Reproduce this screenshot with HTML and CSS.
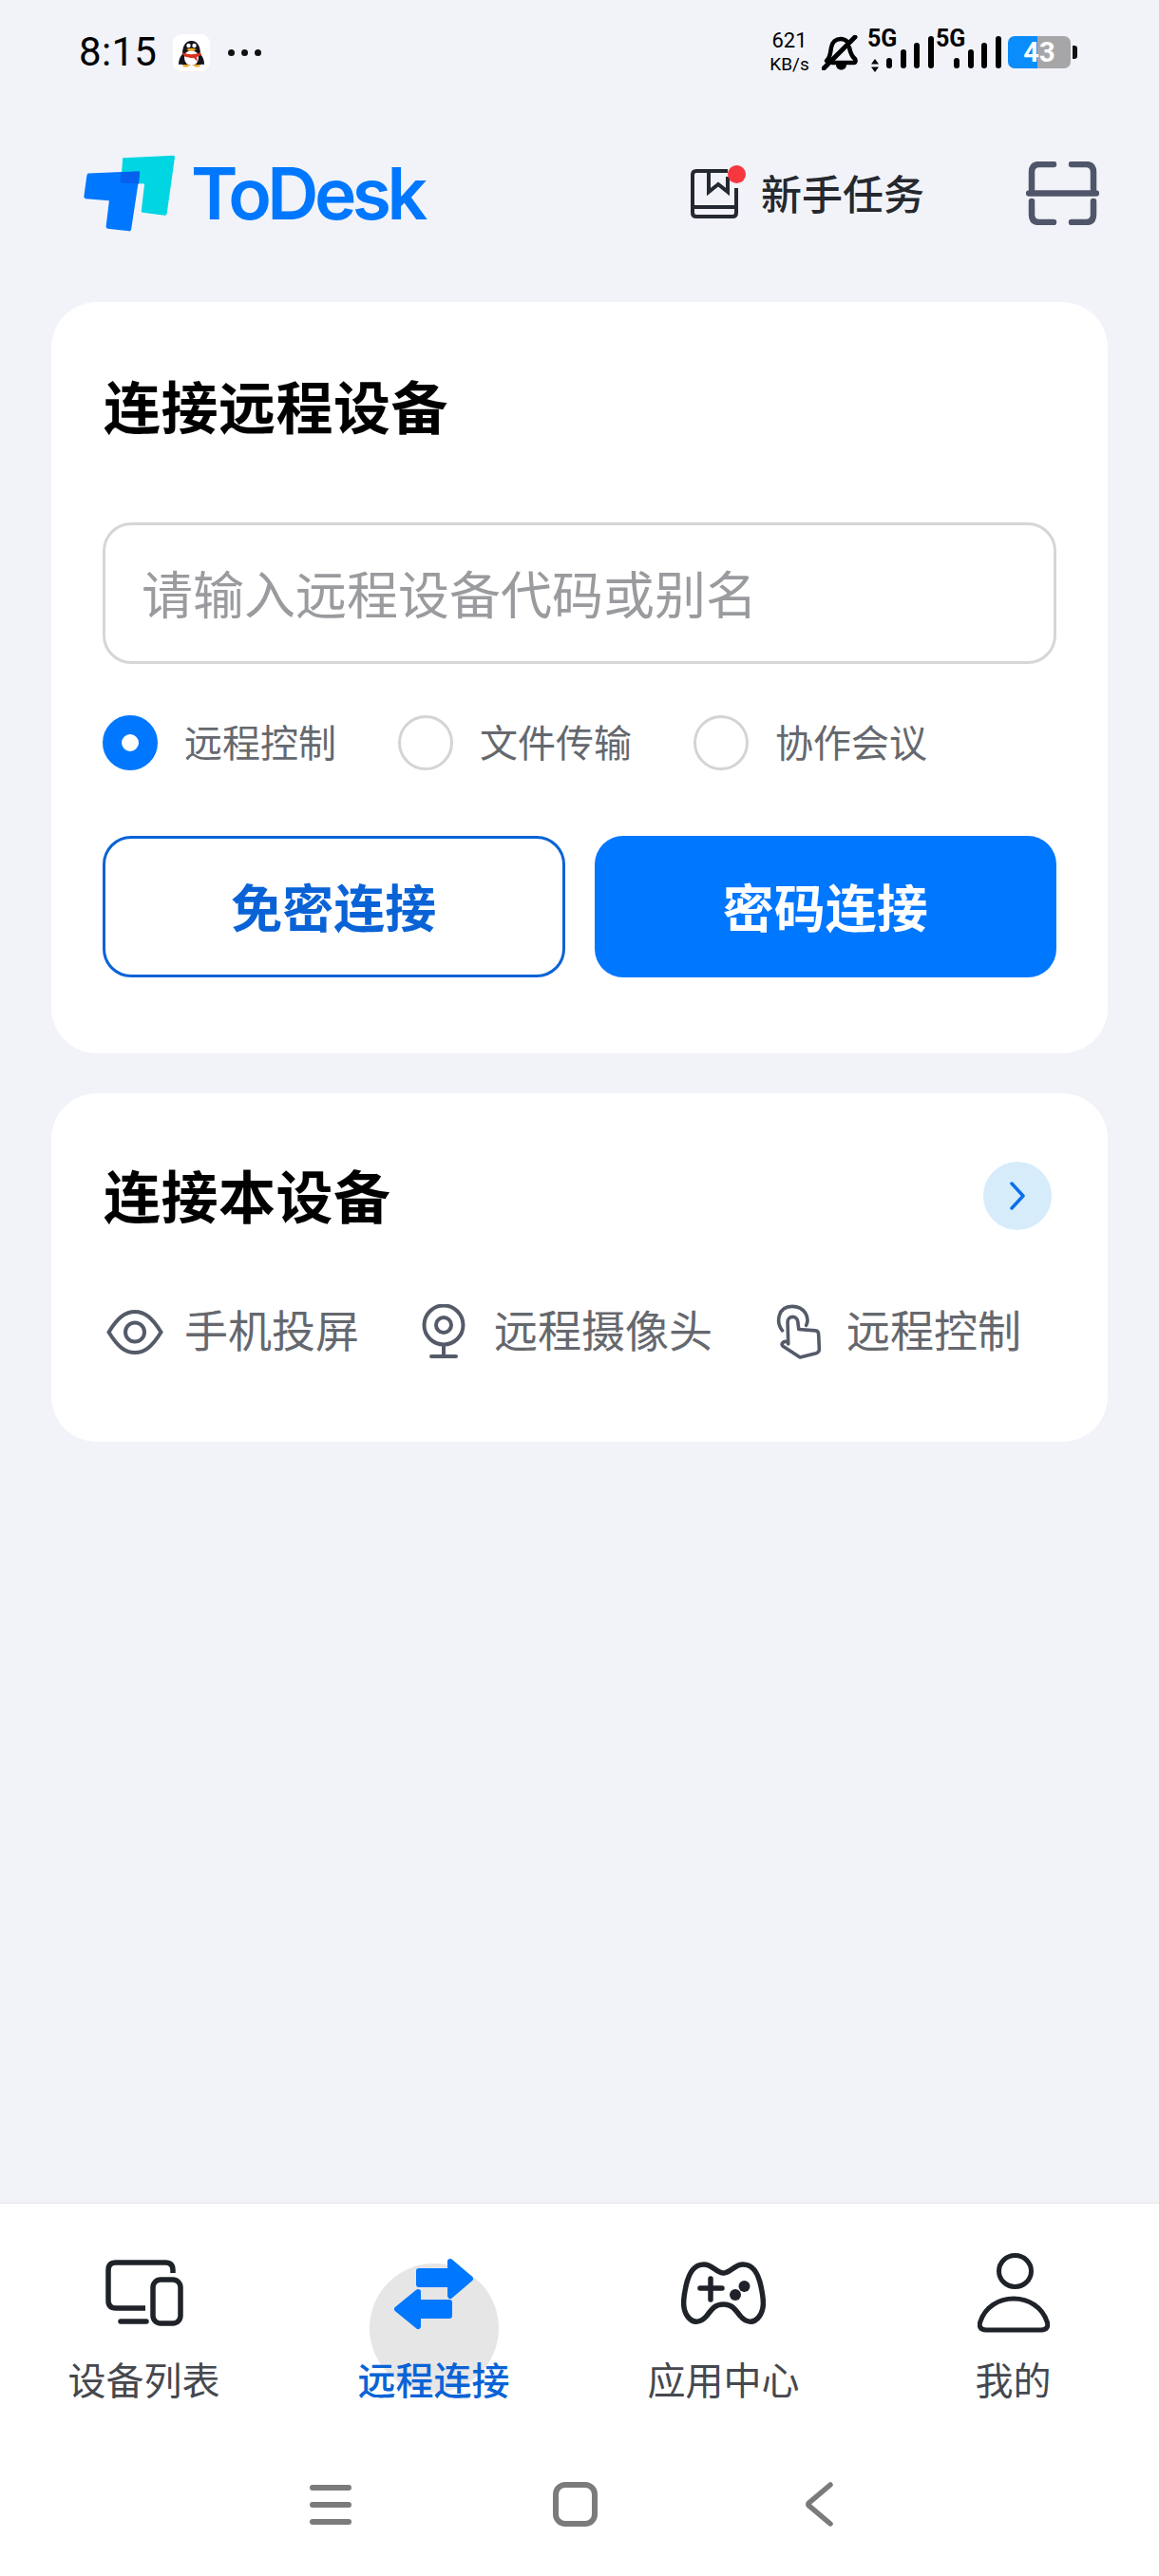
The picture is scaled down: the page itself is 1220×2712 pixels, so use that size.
FILE: index.html
```html
<!DOCTYPE html>
<html lang="zh-CN">
<head>
<meta charset="utf-8">
<title>ToDesk</title>
<link rel="stylesheet" href="styles.css">
</head>
<body>
<div class="page">
  <div class="status">
    <span class="time">8:15</span>
    <span class="qq">
      <svg class="qq-svg" viewBox="0 0 39 39">
        <path d="M12 33c-3-2-6-1-6-1 0-4 1-8 4-11 0-8 3-14 9.500-14S29 13 29 21c3 3 4 7 4 11 0 0-3-1-6 1z" fill="#14141a"/>
        <ellipse cx="19.500" cy="25" rx="7.500" ry="8" fill="#fff"/>
        <path d="M10 19c6 3 13 3 19 0l1 3-5 2 1 5-4-4c-4 0-8 0-11-3z" fill="#d9301f"/>
        <circle cx="16.500" cy="12" r="2.200" fill="#fff"/><circle cx="22.500" cy="12" r="2.200" fill="#fff"/>
        <path d="M14 16q5.500-2.500 11 0-5.500 3.500-11 0z" fill="#f0a81c"/>
        <path d="M11 32h6l-1 2.500h-5zM22 32h6v2.500h-5z" fill="#f0a81c"/>
      </svg>
    </span>
    <span class="more"><i></i><i></i><i></i></span>
    <div class="status-right">
      <div class="speed"><span class="speed-num">621</span><span>KB/s</span></div>
      <svg class="bell" viewBox="0 0 38 37">
        <path d="M5 27c4-3 4-8 5-14 1-6 5-9 10-9 3 0 5 1 7 3M29 13c1 5 2 9 6 12 1 2 .5 4-1 4H11" fill="none" stroke="#000" stroke-width="4.500" stroke-linecap="round"/>
        <path d="M2 35 35 2" stroke="#000" stroke-width="5" stroke-linecap="round"/>
        <path d="M15 31h11c0 3-2 5.500-5.500 5.500S15 34 15 31z" fill="#000"/>
      </svg>
      <div class="sim sim-first">
        <span class="five-g">5G</span>
        <svg class="data-arrows" viewBox="0 0 10 14"><path d="M5 0l4 5.500H1zM5 14 1 8.500h8z" fill="#000"/></svg>
        <span class="bar bar-1"></span><span class="bar bar-2"></span><span class="bar bar-3"></span><span class="bar bar-4"></span>
      </div>
      <div class="sim sim-second">
        <span class="five-g">5G</span>
        <span class="bar bar-1"></span><span class="bar bar-2"></span><span class="bar bar-3"></span><span class="bar bar-4"></span>
      </div>
      <div class="battery"><span>43</span></div>
      <span class="nub"></span>
    </div>
  </div>

  <header class="header">
    <div class="logo">
      <svg class="logo-mark" viewBox="55 68 290 244">
        <path d="M178 78 338 70q6 0 5 6L318 254q-1 7-7 6l-70-9q-5-1-4-6l10-85-75-3z" fill="#00d6e2"/>
        <path d="M70 127 226 120q7 0 6 6L205 304q-1 7-7 6l-68-8q-6-1-5-7l10-82-74-6q-7-1-6-7l9-66q1-7 6-7z" fill="#0077ff"/>
        <path d="M172 124 232 121 229 160 170 157z" fill="#0660ee"/>
      </svg>
      <span class="logo-text">ToDesk</span>
    </div>
    <div class="task">
      <span class="task-icon">
        <svg class="task-svg" viewBox="0 0 50 52">
          <path d="M39 2H6Q2 2 2 6v40q0 4 4 4h38q4 0 4-4V20M2 40h46" fill="none" stroke="#242830" stroke-width="4"/>
          <path d="M19 3v21l10-8 10 8V8" fill="none" stroke="#242830" stroke-width="4"/>
        </svg>
        <span class="task-dot"></span>
      </span>
      <span class="task-label">新手任务</span>
    </div>
    <svg class="scan" viewBox="0 0 77 67">
      <path d="M29 3H14Q6 3 6 11v18M48 3h15q8 0 8 8v18M29 64H14q-8 0-8-8V42M48 64h15q8 0 8-8V42" fill="none" stroke="#50566a" stroke-width="6.500" stroke-linecap="round"/>
      <path d="M3 33.500h71" stroke="#50566a" stroke-width="6.500" stroke-linecap="round"/>
    </svg>
  </header>

  <main class="main">
    <section class="card card-remote">
      <h2 class="title">连接远程设备</h2>
      <div class="input"><span class="lift">请输入远程设备代码或别名</span></div>
      <div class="radios">
        <div class="radio-item"><span class="radio radio-on"></span><span class="radio-label">远程控制</span></div>
        <div class="radio-item"><span class="radio"></span><span class="radio-label">文件传输</span></div>
        <div class="radio-item"><span class="radio"></span><span class="radio-label">协作会议</span></div>
      </div>
      <div class="buttons">
        <div class="btn btn-outline"><span class="lift">免密连接</span></div>
        <div class="btn btn-solid"><span class="lift">密码连接</span></div>
      </div>
    </section>

    <section class="card card-local">
      <div class="local-head">
        <h2 class="title">连接本设备</h2>
        <span class="go">
          <svg class="go-svg" viewBox="0 0 18 32"><path d="M3 3l12 13L3 29" fill="none" stroke="#0a6fe8" stroke-width="3.500" stroke-linecap="round" stroke-linejoin="round"/></svg>
        </span>
      </div>
      <div class="local-items">
        <div class="local-item item-eye">
          <svg class="ic-eye" viewBox="0 0 60 47">
            <path d="M2.500 23.500C12 8 20 2 30 2s18 6 27.500 21.500C48 39 40 45 30 45S12 39 2.500 23.500z" fill="none" stroke="#545a68" stroke-width="4"/>
            <circle cx="30" cy="23.500" r="10" fill="none" stroke="#545a68" stroke-width="4"/>
          </svg>
          <span class="local-label">手机投屏</span>
        </div>
        <div class="local-item item-cam">
          <svg class="ic-cam" viewBox="0 0 46 58">
            <circle cx="23" cy="22" r="20.500" fill="none" stroke="#545a68" stroke-width="4"/>
            <circle cx="23" cy="22" r="8" fill="none" stroke="#545a68" stroke-width="4"/>
            <path d="M23 43v12M10 55h26" fill="none" stroke="#545a68" stroke-width="4" stroke-linecap="round"/>
          </svg>
          <span class="local-label">远程摄像头</span>
        </div>
        <div class="local-item item-hand">
          <svg class="ic-hand" viewBox="110 38 150 175">
            <path d="M133 122C112 95 118 44 165 44c40 0 57 36 45 61" fill="none" stroke="#545a68" stroke-width="11" stroke-linecap="round"/>
            <path d="M152 165 150 95c0-23 32-23 33 0l3 23 54 4c8 0 10 8 10 16l2 44c0 8-7 13-17 15l-45 11-55-36c-7-7 0-20 17-12z" fill="none" stroke="#545a68" stroke-width="11" stroke-linejoin="round"/>
          </svg>
          <span class="local-label">远程控制</span>
        </div>
      </div>
    </section>
  </main>

  <nav class="bottom">
    <div class="tabs">
      <div class="tab">
        <span class="tab-icon">
          <svg class="ic-device" viewBox="0 0 82 70">
            <path d="M71 14v-3q0-8-8-8H11Q3 3 3 11v32q0 8 8 8h31" fill="none" stroke="#1f2329" stroke-width="5.500"/>
            <path d="M16 65h27" stroke="#1f2329" stroke-width="5.500" stroke-linecap="round"/>
            <rect x="50" y="21" width="29" height="46" rx="8" fill="none" stroke="#1f2329" stroke-width="5.500"/>
          </svg>
        </span>
        <span class="tab-label">设备列表</span>
      </div>
      <div class="tab tab-active">
        <span class="ripple"></span>
        <span class="tab-icon">
          <svg class="ic-swap" viewBox="0 0 83 77">
            <path d="M26 15h33V5l21 18-21 18V29H26z" fill="#0077ff" stroke="#0077ff" stroke-width="6" stroke-linejoin="round"/>
            <path d="M58 48H25V37L3 55l22 18V62h33z" fill="#0077ff" stroke="#0077ff" stroke-width="6" stroke-linejoin="round"/>
          </svg>
        </span>
        <span class="tab-label">远程连接</span>
      </div>
      <div class="tab">
        <span class="tab-icon">
          <svg class="ic-game" viewBox="0 0 89 67">
            <path d="M24 3c9 0 13 9 20.500 9S56 3 65 3c11 0 16 9 19 23 3 14 4 24-2 32-6 8-14 6-20-1-6-8-9-12-17.500-12S33 49 27 57c-6 7-14 9-20 1C1 50 2 40 5 26 8 12 13 3 24 3z" fill="none" stroke="#1f2329" stroke-width="5.500"/>
            <path d="M31 18v22M20 28h23" stroke="#1f2329" stroke-width="5.500" stroke-linecap="round"/>
            <circle cx="66.500" cy="26" r="6" fill="#1f2329"/>
            <circle cx="57" cy="35" r="6" fill="#1f2329"/>
          </svg>
        </span>
        <span class="tab-label">应用中心</span>
      </div>
      <div class="tab">
        <span class="tab-icon">
          <svg class="ic-user" viewBox="0 0 76 84">
            <ellipse cx="39.500" cy="19" rx="17" ry="16.500" fill="none" stroke="#1f2329" stroke-width="5"/>
            <path d="M9 81h58c6 0 8-4 6-9-5-15-19-24-35-24S8 57 3 72c-2 5 0 9 6 9z" fill="none" stroke="#1f2329" stroke-width="5"/>
          </svg>
        </span>
        <span class="tab-label">我的</span>
      </div>
    </div>
    <div class="sysnav">
      <svg class="sys-menu" viewBox="0 0 44 47"><path d="M3 6h38M3 24h38M3 42h38" stroke="#7b7b7b" stroke-width="6" stroke-linecap="round"/></svg>
      <svg class="sys-home" viewBox="0 0 47 47"><rect x="3" y="3" width="41" height="41" rx="10" fill="none" stroke="#7b7b7b" stroke-width="6"/></svg>
      <svg class="sys-back" viewBox="0 0 29 47"><path d="M26 3 4 21.500q-2.500 2 0 4L26 44" fill="none" stroke="#7b7b7b" stroke-width="5.500" stroke-linecap="round"/></svg>
    </div>
  </nav>
</div>
</body>
</html>
```

FILE: styles.css
```css
* { box-sizing: border-box; }
html, body { margin: 0; padding: 0; }
body { font-family: "Noto Sans CJK SC", "Noto Sans", sans-serif; background: #f1f3f8; }
svg { display: block; flex: none; }
.page { width: 1220px; height: 2712px; display: flex; flex-direction: column; overflow: hidden; background: #f1f3f8; }
.lift { padding-bottom: 3px; }

/* status bar */
.status { height: 110px; display: flex; align-items: center; padding: 0 86px 0 83px; }
.time { font-family: Roboto, sans-serif; font-size: 42px; line-height: 1; color: #000; width: 99px; letter-spacing: .3px; }
.qq { width: 39px; height: 39px; background: #fff; border-radius: 9px; }
.qq-svg { width: 39px; height: 39px; }
.more { display: flex; gap: 7px; margin-left: 19px; }
.more i { width: 7px; height: 7px; border-radius: 50%; background: #111; }
.status-right { margin-left: auto; display: flex; align-items: center; }
.speed { display: flex; flex-direction: column; align-items: center; width: 42px; font-family: Roboto, sans-serif; color: #000; font-size: 19px; line-height: 25px; }
.speed-num { font-size: 22px; }
.bell { width: 38px; height: 37px; margin-left: 13px; }
.sim { position: relative; height: 34px; display: flex; align-items: flex-end; }
.sim-first { width: 67px; margin-left: 10px; padding-left: 3px; }
.sim-second { width: 67px; margin-left: 5px; padding-left: 19px; }
.five-g { position: absolute; left: 0; top: -9px; font-family: Roboto, sans-serif; font-weight: 700; font-size: 25px; line-height: 24px; color: #000; }
.data-arrows { width: 10px; height: 14px; margin: 0 7px -4px 0; }
.bar { flex: none; width: 6px; border-radius: 3px; background: #000; margin-right: 8.500px; }
.bar-1 { height: 11px; }
.bar-2 { height: 20px; }
.bar-3 { height: 27px; }
.bar-4 { height: 34px; }
.battery { width: 66px; height: 34px; margin-left: 9px; border-radius: 7px; background: linear-gradient(90deg, #0a8cfb 0 47%, #a6a6a8 47% 100%); display: flex; align-items: center; justify-content: center; color: #fff; font-family: Roboto, sans-serif; font-weight: 700; font-size: 29px; line-height: 1; }
.nub { width: 5px; height: 14px; margin-left: 2px; background: #111; border-radius: 0 3px 3px 0; }

/* app header */
.header { height: 187px; display: flex; align-items: center; padding: 0 63px 0 88px; }
.logo { display: flex; align-items: center; }
.logo-mark { width: 97px; height: 81px; }
.logo-text { margin-left: 16px; font-family: Inter, sans-serif; font-weight: 600; font-size: 75px; line-height: 1; letter-spacing: -4.500px; color: #0077ff; }
.task { margin-left: auto; display: flex; align-items: center; }
.task-icon { position: relative; width: 50px; height: 52px; }
.task-svg { width: 50px; height: 52px; }
.task-dot { position: absolute; right: -8px; top: -4px; width: 19px; height: 19px; border-radius: 50%; background: #f5383f; }
.task-label { margin-left: 24px; font-size: 43px; line-height: 52px; font-weight: 500; color: #25282e; padding-bottom: 3px; }
.scan { width: 77px; height: 67px; margin-left: 107px; }

/* cards */
.main { padding: 21px 54px 0; display: flex; flex-direction: column; gap: 42px; flex: 1; }
.card { background: #fff; border-radius: 48px; }
.card-remote { padding: 78px 54px 80px; }
.card-local { padding: 72px 59px 87px 58px; }
.title { margin: 0; font-size: 60px; line-height: 60px; font-weight: 700; color: #000; }
.card-remote .title { margin-left: 1px; letter-spacing: .5px; }
.card-local .title { margin: 0 0 4px -3px; line-height: 50px; letter-spacing: .5px; }
.input { margin-top: 94px; height: 149px; border: 3px solid #d6d6d6; border-radius: 30px; padding-left: 38px; display: flex; align-items: center; font-size: 54px; color: #999b9e; }
.radios { margin-top: 54px; display: flex; gap: 65px; }
.radio-item { display: flex; align-items: center; gap: 28px; }
.radio { width: 58px; height: 58px; border-radius: 50%; border: 3px solid #d4d4d4; background: #fff; }
.radio-on { border: 20px solid #0077ff; }
.radio-label { font-size: 40px; line-height: 50px; color: #65686e; padding-bottom: 4px; }
.buttons { margin-top: 69px; display: grid; grid-template-columns: 1fr 1fr; gap: 31px; }
.btn { height: 149px; border-radius: 30px; display: flex; align-items: center; justify-content: center; font-size: 54px; font-weight: 700; }
.btn-outline { border: 3px solid #0a63d6; color: #0a63d6; background: #fff; }
.btn-solid { background: #0077ff; color: #fff; }
.local-head { height: 72px; display: flex; align-items: center; justify-content: space-between; }
.go { width: 72px; height: 72px; border-radius: 50%; background: #d6ecfb; display: flex; align-items: center; justify-content: center; }
.go-svg { width: 18px; height: 32px; }
.local-items { margin-top: 78px; display: flex; align-items: center; font-size: 46px; line-height: 46px; height: 58px; color: #65686e; }
.local-item { display: flex; align-items: center; }
.local-label { padding-bottom: 8px; }
.item-eye .local-label { margin-left: -2px; }
.ic-eye { width: 60px; height: 47px; }
.ic-cam { width: 46px; height: 58px; }
.ic-hand { width: 49px; height: 58px; }
.item-eye { gap: 24px; }
.item-cam { gap: 30px; margin-left: 66px; }
.item-hand { gap: 26px; margin-left: 66px; }

/* bottom navigation */
.bottom { height: 393px; flex: none; background: #fff; border-top: 1px solid #e6e6e6; }
.tabs { display: grid; grid-template-columns: repeat(4, 1fr); }
.tab { position: relative; display: flex; flex-direction: column; align-items: center; padding-top: 52px; margin-left: -2px; }
.tab-icon { position: relative; height: 84px; display: flex; align-items: center; justify-content: center; }
.tab-label { position: relative; margin-top: 28px; margin-bottom: 2px; font-size: 40px; line-height: 40px; color: #45484e; }
.tab-active .tab-label { color: #0a63d6; font-weight: 500; }
.ripple { position: absolute; left: 86px; top: 63px; width: 136px; height: 136px; border-radius: 50%; background: #e6e6e6; }
.ic-device { width: 82px; height: 70px; }
.ic-swap { width: 83px; height: 77px; }
.ic-game { width: 89px; height: 67px; }
.ic-user { width: 76px; height: 84px; }
.sysnav { margin-top: 87px; padding-left: 326px; display: flex; align-items: center; }
.sys-menu { width: 44px; height: 47px; }
.sys-home { width: 47px; height: 47px; margin-left: 212px; }
.sys-back { width: 29px; height: 47px; margin-left: 219px; }
```
